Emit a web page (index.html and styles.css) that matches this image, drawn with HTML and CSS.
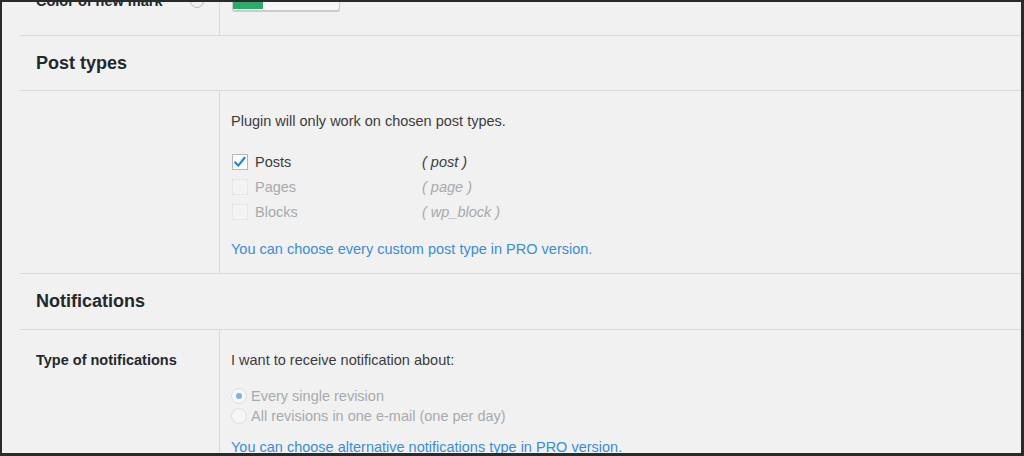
FILE: index.html
```html
<!DOCTYPE html>
<html>
<head>
<meta charset="utf-8">
<link rel="stylesheet" href="styles.css">
</head>
<body>
<div class="frame">
  <div class="content">
    <div class="row row-top">
      <div class="th"><span class="label cut">Color of new mark</span><span class="help"></span></div>
      <div class="td">
        <div class="color-btn"><span class="swatch"></span></div>
      </div>
    </div>
    <h2 class="section-title">Post types</h2>
    <div class="row row-types">
      <div class="th"></div>
      <div class="td">
        <p class="desc">Plugin will only work on chosen post types.</p>
        <ul class="types">
          <li class="type">
            <span class="cb checked"><svg viewBox="0 0 16 16" width="16" height="16"><path d="M3.2 8.4 L6.3 11.6 L12.6 3.8" fill="none" stroke="#1e8cbe" stroke-width="2.2" stroke-linecap="round" stroke-linejoin="round"/></svg></span>
            <span class="name">Posts</span><span class="slug">( post )</span>
          </li>
          <li class="type disabled">
            <span class="cb"></span>
            <span class="name">Pages</span><span class="slug">( page )</span>
          </li>
          <li class="type disabled">
            <span class="cb"></span>
            <span class="name">Blocks</span><span class="slug">( wp_block )</span>
          </li>
        </ul>
        <a class="pro" href="#">You can choose every custom post type in PRO version.</a>
      </div>
    </div>
    <h2 class="section-title tall">Notifications</h2>
    <div class="row row-notif">
      <div class="th"><span class="label">Type of notifications</span></div>
      <div class="td">
        <p class="desc">I want to receive notification about:</p>
        <ul class="radios">
          <li class="radio-item"><span class="radio on"></span><span>Every single revision</span></li>
          <li class="radio-item"><span class="radio"></span><span>All revisions in one e-mail (one per day)</span></li>
        </ul>
        <a class="pro" href="#">You can choose alternative notifications type in PRO version.</a>
      </div>
    </div>
  </div>
</div>
</body>
</html>
```
FILE: styles.css
```css
html, body {
  margin: 0;
  padding: 0;
  background: #1c1c1c;
}
body {
  width: 1024px;
  height: 456px;
  overflow: hidden;
  font-family: "Liberation Sans", Arial, sans-serif;
  font-size: 14.5px;
  color: #3c3c3c;
}
.frame {
  box-sizing: border-box;
  width: 1024px;
  height: 456px;
  border-top: 2px solid #2a2a2a;
  border-left: 2px solid #2a2a2a;
  border-right: 3px solid #2a2a2a;
  border-bottom: 3px solid #2a2a2a;
  background: #f1f1f1;
  overflow: hidden;
}
.content {
  margin-left: 18px;
  height: 100%;
  overflow: hidden;
}
.row {
  display: flex;
  border-bottom: 1px solid #dadada;
}
.row:last-child {
  border-bottom: 0;
}
.th {
  width: 199px;
  flex: none;
  border-right: 1px solid #dadada;
  box-sizing: content-box;
  position: relative;
}
.td {
  flex: 1;
  padding-left: 11px;
}
.label {
  display: block;
  padding-left: 16px;
  font-weight: bold;
  color: #23282d;
}
.row-top {
  height: 33px;
}
.row-top .th {
  overflow: hidden;
}
.label.cut {
  margin-top: -9px;
}
.help {
  position: absolute;
  left: 170px;
  top: -8px;
  width: 14px;
  height: 14px;
  border-radius: 50%;
  border: 1px solid #bbb;
  box-sizing: border-box;
}
.color-btn {
  margin-top: -2px;
  margin-left: 1px;
  width: 106px;
  height: 10px;
  border: 1px solid #ccc;
  border-top: 0;
  border-radius: 0 0 3px 3px;
  background: #f7f7f7;
  box-shadow: 0 1px 0 #ccc;
  display: flex;
}
.swatch {
  width: 30px;
  height: 9px;
  background: #2eab6b;
}
.section-title {
  margin: 0;
  height: 54px;
  display: flex;
  align-items: center;
  padding-left: 16px;
  font-size: 18px;
  font-weight: bold;
  color: #23282d;
  border-bottom: 1px solid #dadada;
}
.section-title.tall {
  height: 55px;
}
.row-types {
  height: 182px;
}
.desc {
  margin: 20px 0 0;
  line-height: 20px;
}
.types {
  list-style: none;
  margin: 18px 0 0;
  padding: 0;
}
.type {
  display: flex;
  align-items: center;
  height: 25px;
}
.cb {
  width: 16px;
  height: 16px;
  box-sizing: border-box;
  border: 1px solid #b4b9be;
  background: #fbfbfb;
  margin-left: 1px;
  margin-right: 7px;
  flex: none;
  display: flex;
}
.cb svg {
  margin: -1px;
}
.type.disabled .cb {
  border: 1px dotted #dcdcdc;
  background: #f3f3f3;
}
.name {
  width: 167px;
}
.slug {
  font-style: italic;
}
.type.disabled {
  color: #a7aaad;
}
.pro {
  display: block;
  margin-top: 15px;
  color: #3a8dd6;
  text-decoration: none;
  line-height: 20px;
}
.row-notif .label {
  margin-top: 20px;
  line-height: 20px;
}
.row-notif .desc {
  margin-top: 20px;
}
.radios {
  list-style: none;
  margin: 16px 0 0;
  padding: 0;
  color: #a7aaad;
}
.radio-item {
  display: flex;
  align-items: center;
  height: 20px;
}
.radio {
  width: 16px;
  height: 16px;
  box-sizing: border-box;
  border-radius: 50%;
  border: 1px solid #dedede;
  background: #f6f6f6;
  margin-left: 0;
  margin-right: 4px;
  display: flex;
  align-items: center;
  justify-content: center;
}
.radio.on::after {
  content: "";
  width: 6px;
  height: 6px;
  border-radius: 50%;
  background: #7fb3dc;
}
.row-notif .pro {
  margin-top: 11px;
}
```
